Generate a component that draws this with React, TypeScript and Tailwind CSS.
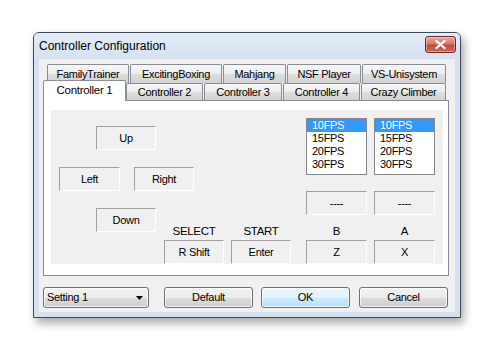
import React from "react";

const sunken =
  "border-t border-l border-b border-r border-t-[#a0a0a0] border-l-[#a0a0a0] border-b-white border-r-white";

function Box({ children, w = "w-[60px]" }: { children: React.ReactNode; w?: string }) {
  return (
    <div className={`${w} h-[24px] flex items-center justify-center ${sunken}`}>{children}</div>
  );
}

function ListBox() {
  const items = ["10FPS", "15FPS", "20FPS", "30FPS"];
  return (
    <div className="w-[61px] h-[57px] border border-[#828790] bg-white flex flex-col">
      {items.map((t, i) => (
        <div
          key={t}
          className={
            i === 0
              ? "h-[13px] leading-[13px] pl-[5px] bg-[#3399ff] text-white"
              : "h-[13px] leading-[13px] pl-[5px] text-black"
          }
        >
          {t}
        </div>
      ))}
    </div>
  );
}

const tabBg = "bg-[linear-gradient(#f7f7f7,#ececec_50%,#dedede_50%,#d2d2d2)]";
const btnBg = "bg-[linear-gradient(#f3f3f3,#ebebeb_50%,#dddddd_50%,#cfcfcf)]";

function Tab1({ label, w }: { label: string; w: string }) {
  return (
    <div
      className={`${w} h-[19px] border border-b-0 border-[#898c95] rounded-t-[2px] ${tabBg} flex items-center justify-center`}
    >
      {label}
    </div>
  );
}

function Tab2({ label, w }: { label: string; w: string }) {
  return (
    <div
      className={`${w} h-[17px] border border-b-0 border-[#898c95] rounded-t-[2px] ${tabBg} flex items-center justify-center`}
    >
      {label}
    </div>
  );
}

function Btn({ label, w, ml, focused }: { label: string; w: string; ml: string; focused?: boolean }) {
  return (
    <div
      className={
        focused
          ? `${w} ${ml} h-[21px] rounded-[3px] border border-[#3c7fb1] bg-[linear-gradient(#eef8fd,#e1f2fc_50%,#cdeafb_50%,#b9e0f8)] shadow-[inset_0_0_0_1px_rgba(255,255,255,0.7)] flex items-center justify-center`
          : `${w} ${ml} h-[21px] rounded-[3px] border border-[#707070] ${btnBg} shadow-[inset_0_0_0_1px_rgba(255,255,255,0.7)] flex items-center justify-center`
      }
    >
      {label}
    </div>
  );
}

export default function App() {
  return (
    <div className="relative w-[493px] h-[350px] bg-white overflow-hidden font-['Liberation_Sans',Arial,sans-serif] text-[11px] tracking-[-0.3px] text-black">
      <div className="pt-[32px] pl-[33px]">
        <div className="w-[428px] h-[286px] border border-[#3f4b5c] rounded-t-[6px] bg-[#d5e1ef] shadow-[3px_5px_10px_rgba(0,0,0,0.35)] flex flex-col">
          {/* title bar */}
          <div className="h-[26px] rounded-t-[5px] bg-[linear-gradient(#e4ecf6,#d5e1ef)] flex items-center pl-[5px] pr-[4px]">
            <div className="text-[12px] tracking-normal text-black">Controller Configuration</div>
            <div className="ml-auto mb-[3px] w-[31px] h-[17px] rounded-[3px] border border-[#6d2a26] bg-[linear-gradient(#e9a99f,#d7776b_45%,#c24a3c_55%,#d0685a)] shadow-[inset_0_0_0_1px_rgba(255,255,255,0.35)] flex items-center justify-center">
              <svg width="11" height="9" viewBox="0 0 11 9">
                <path d="M1.5 1 L9.5 8 M9.5 1 L1.5 8" stroke="#ffffff" strokeWidth="2.2" strokeLinecap="square" />
              </svg>
            </div>
          </div>
          {/* client */}
          <div className="mx-[5px] mb-[5px] flex-1 bg-[#f0f0f0] pt-[5px] pl-[4px] pr-[6px] pb-[4px] flex flex-col">
            {/* tabs row 1 */}
            <div className="flex gap-[1px] pl-[4px]">
              <Tab1 label="FamilyTrainer" w="w-[82px]" />
              <Tab1 label="ExcitingBoxing" w="w-[92px]" />
              <Tab1 label="Mahjang" w="w-[63px]" />
              <Tab1 label="NSF Player" w="w-[74px]" />
              <Tab1 label="VS-Unisystem" w="w-[84px]" />
            </div>
            {/* tabs row 2 */}
            <div className="flex items-end h-[20px] mt-[-3px]">
              <div className="relative z-10 w-[83px] h-[21px] -mb-px border border-b-0 border-[#898c95] rounded-t-[2px] bg-white flex items-center justify-center text-[11.5px]">
                Controller 1
              </div>
              <div className="flex gap-[1px]">
                <Tab2 label="Controller 2" w="w-[77px]" />
                <Tab2 label="Controller 3" w="w-[78px]" />
                <Tab2 label="Controller 4" w="w-[77px]" />
                <Tab2 label="Crazy Climber" w="w-[85px]" />
              </div>
            </div>
            {/* panel */}
            <div className="w-[406px] h-[176px] border border-[#898c95] bg-white pt-[9px] pl-[7px] pr-[5px] pb-[11px]">
              <div className="h-[154px] bg-[#f0f0f0] flex">
                {/* left block */}
                <div className="w-[255px] flex flex-col">
                  <div className="ml-[45px] mt-[16px]">
                    <Box>Up</Box>
                  </div>
                  <div className="flex ml-[8px] mt-[17px] gap-[14px]">
                    <Box w="w-[61px]">Left</Box>
                    <Box>Right</Box>
                  </div>
                  <div className="flex mt-[17px]">
                    <div className="ml-[45px]">
                      <Box>Down</Box>
                    </div>
                    <div className="ml-[8px] mt-[16px] flex flex-col">
                      <div className="h-[14px] leading-[14px] text-center text-[11.5px]">SELECT</div>
                      <div className="mt-[2px]">
                        <Box>R Shift</Box>
                      </div>
                    </div>
                    <div className="ml-[7px] mt-[16px] flex flex-col">
                      <div className="h-[14px] leading-[14px] text-center text-[11.5px]">START</div>
                      <div className="mt-[2px]">
                        <Box>Enter</Box>
                      </div>
                    </div>
                  </div>
                </div>
                {/* right columns */}
                {["B", "A"].map((l, i) => (
                  <div key={l} className={i === 0 ? "flex flex-col" : "flex flex-col ml-[7px]"}>
                    <div className="mt-[8px]">
                      <ListBox />
                    </div>
                    <div className="mt-[16px]">
                      <Box w="w-[61px]">----</Box>
                    </div>
                    <div className="mt-[9px] h-[14px] leading-[14px] text-center text-[11.5px]">{l}</div>
                    <div className="mt-[2px]">
                      <Box w="w-[61px]">{i === 0 ? "Z" : "X"}</Box>
                    </div>
                  </div>
                ))}
              </div>
            </div>
            {/* bottom buttons */}
            <div className="flex mt-[11px]">
              <div className={`w-[106px] h-[21px] rounded-[3px] border border-[#707070] ${btnBg} shadow-[inset_0_0_0_1px_rgba(255,255,255,0.7)] flex items-center pl-[3px] pr-[5px]`}>
                <span>Setting 1</span>
                <svg className="ml-auto" width="7" height="4" viewBox="0 0 7 4">
                  <path d="M0 0 L7 0 L3.5 4 Z" fill="#000" />
                </svg>
              </div>
              <Btn label="Default" w="w-[89px]" ml="ml-[15px]" />
              <Btn label="OK" w="w-[89px]" ml="ml-[8px]" focused />
              <Btn label="Cancel" w="w-[89px]" ml="ml-[9px]" />
            </div>
          </div>
        </div>
      </div>
    </div>
  );
}
